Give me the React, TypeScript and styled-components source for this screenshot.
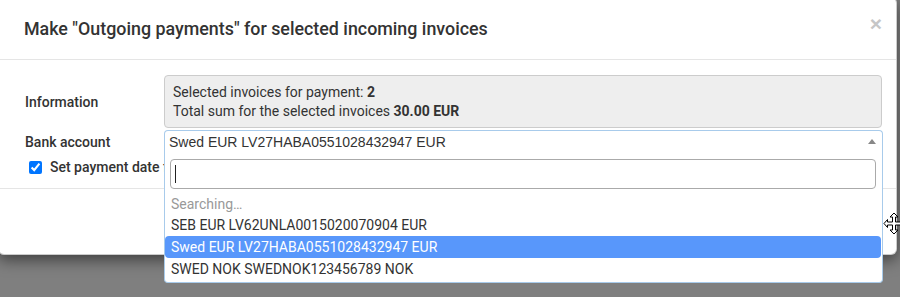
import React from "react";
import styled, { createGlobalStyle } from "styled-components";

const Global = createGlobalStyle`
  html, body { margin: 0; padding: 0; }
  body {
    background: #7f7f7f;
    font-family: Roboto, "Liberation Sans", Arial, sans-serif;
    color: #333;
    overflow: hidden;
  }
`;

const Backdrop = styled.div`
  position: relative;
  width: 900px;
  height: 297px;
  overflow: hidden;
  background: #7f7f7f;
`;

const Modal = styled.div`
  margin: -3px 0 0 -2px;
  width: 899px;
  box-sizing: border-box;
  background: #fff;
  border: 1px solid rgba(0, 0, 0, 0.2);
  border-radius: 6px;
  box-shadow: 0 5px 15px rgba(0, 0, 0, 0.5);
  display: flex;
  flex-direction: column;
`;

const Header = styled.div`
  height: 62px;
  box-sizing: border-box;
  padding: 0 14px 0 25px;
  display: flex;
  align-items: center;
  justify-content: space-between;
  border-bottom: 1px solid #e5e5e5;
`;

const Title = styled.h4`
  margin: 0;
  font-size: 17.85px;
  font-weight: 500;
  color: #333;
  letter-spacing: 0;
`;

const Close = styled.span`
  font-size: 21px;
  font-weight: 700;
  color: #c6c6c6;
  line-height: 1;
  font-family: "Liberation Sans", Arial, sans-serif;
  margin-top: -10px;
`;

const Body = styled.div`
  padding: 15px 14px 9px 26px;
  display: flex;
  flex-direction: column;
  gap: 2px;
  border-bottom: 1px solid #e5e5e5;
`;

const Row = styled.div`
  display: grid;
  grid-template-columns: 139px 1fr;
  align-items: center;
`;

const Label = styled.div`
  font-size: 14px;
  font-weight: 500;
  color: #333;
`;

const InfoBox = styled.div`
  background: #eee;
  border: 1px solid #ccc;
  border-radius: 4px;
  padding: 7px 8px 7px 8px;
  font-size: 14px;
  line-height: 19px;
  color: #333;
  height: 53px;
  box-sizing: border-box;
  display: flex;
  flex-direction: column;
  justify-content: center;
`;

const SelectWrap = styled.div`
  position: relative;
  width: 719px;
`;

const SelectBox = styled.div`
  height: 23px;
  box-sizing: border-box;
  border: 1px solid #a8cbeb;
  border-bottom-color: #b6d3ee;
  border-radius: 4px 4px 0 0;
  padding: 0 0 0 4px;
  display: flex;
  align-items: center;
  justify-content: space-between;
  font-family: "Liberation Sans", Arial, sans-serif;
  font-size: 14px;
  color: #333;
  background: #fff;
`;

const Caret = styled.span`
  width: 0;
  height: 0;
  border-left: 4px solid transparent;
  border-right: 4px solid transparent;
  border-bottom: 5px solid #888;
  margin-right: 6px;
`;

const Dropdown = styled.div`
  position: absolute;
  left: 0;
  top: 21px;
  width: 719px;
  height: 132px;
  box-sizing: border-box;
  background: #fff;
  border: 1px solid #a8cbeb;
  border-top: none;
  border-radius: 0 0 4px 4px;
  padding: 8px 1px 2px 0;
  display: flex;
  flex-direction: column;
  z-index: 5;
`;

const SearchInput = styled.div`
  margin: 0 5px 4px 5px;
  height: 30px;
  box-sizing: border-box;
  border: 1px solid #aaa;
  border-radius: 4px;
  display: flex;
  align-items: center;
  padding-left: 4px;
`;

const TextCursor = styled.span`
  width: 1px;
  height: 18px;
  background: #222;
`;

const Option = styled.div<{ $muted?: boolean; $active?: boolean }>`
  height: 22px;
  display: flex;
  align-items: center;
  padding-left: 6px;
  font-size: 14px;
  border-radius: 4px;
  color: ${(p) => (p.$active ? "#fff" : p.$muted ? "#999" : "#333")};
  background: ${(p) => (p.$active ? "#5897fb" : "transparent")};
`;

const CheckRow = styled.label`
  display: flex;
  align-items: center;
  gap: 8px;
  height: 24px;
  margin-left: 2px;
  font-size: 14px;
  font-weight: 500;
  color: #333;
`;

const Check = styled.input`
  width: 13px;
  height: 13px;
  margin: 0 0 0 2px;
  accent-color: #0075ff;
`;

const Footer = styled.div`
  height: 65px;
`;

const MoveCursor = styled.svg`
  position: absolute;
  left: 883px;
  top: 212px;
`;

export default function App() {
  return (
    <>
      <Global />
      <Backdrop>
        <Modal>
          <Header>
            <Title>Make "Outgoing payments" for selected incoming invoices</Title>
            <Close>×</Close>
          </Header>
          <Body>
            <Row>
              <Label>Information</Label>
              <InfoBox>
                <div>
                  Selected invoices for payment: <b>2</b>
                </div>
                <div>
                  Total sum for the selected invoices <b>30.00 EUR</b>
                </div>
              </InfoBox>
            </Row>
            <Row>
              <Label>Bank account</Label>
              <SelectWrap>
                <SelectBox>
                  <span>Swed EUR LV27HABA0551028432947 EUR</span>
                  <Caret />
                </SelectBox>
                <Dropdown>
                  <SearchInput>
                    <TextCursor />
                  </SearchInput>
                  <Option $muted>Searching…</Option>
                  <Option>SEB EUR LV62UNLA0015020070904 EUR</Option>
                  <Option $active>Swed EUR LV27HABA0551028432947 EUR</Option>
                  <Option>SWED NOK SWEDNOK123456789 NOK</Option>
                </Dropdown>
              </SelectWrap>
            </Row>
            <CheckRow>
              <Check type="checkbox" defaultChecked />
              <span>Set payment date for all invoices</span>
            </CheckRow>
          </Body>
          <Footer />
        </Modal>
        <MoveCursor width="22" height="23" viewBox="0 0 22 23">
          <path
            d="M11 1 L15 5 L12.5 5 L12.5 10 L17.5 10 L17.5 7.5 L21 11.5 L17.5 15.5 L17.5 13 L12.5 13 L12.5 18 L15 18 L11 22 L7 18 L9.5 18 L9.5 13 L4.5 13 L4.5 15.5 L1 11.5 L4.5 7.5 L4.5 10 L9.5 10 L9.5 5 L7 5 Z"
            fill="#fff"
            stroke="#000"
            strokeWidth="1"
          />
        </MoveCursor>
      </Backdrop>
    </>
  );
}
